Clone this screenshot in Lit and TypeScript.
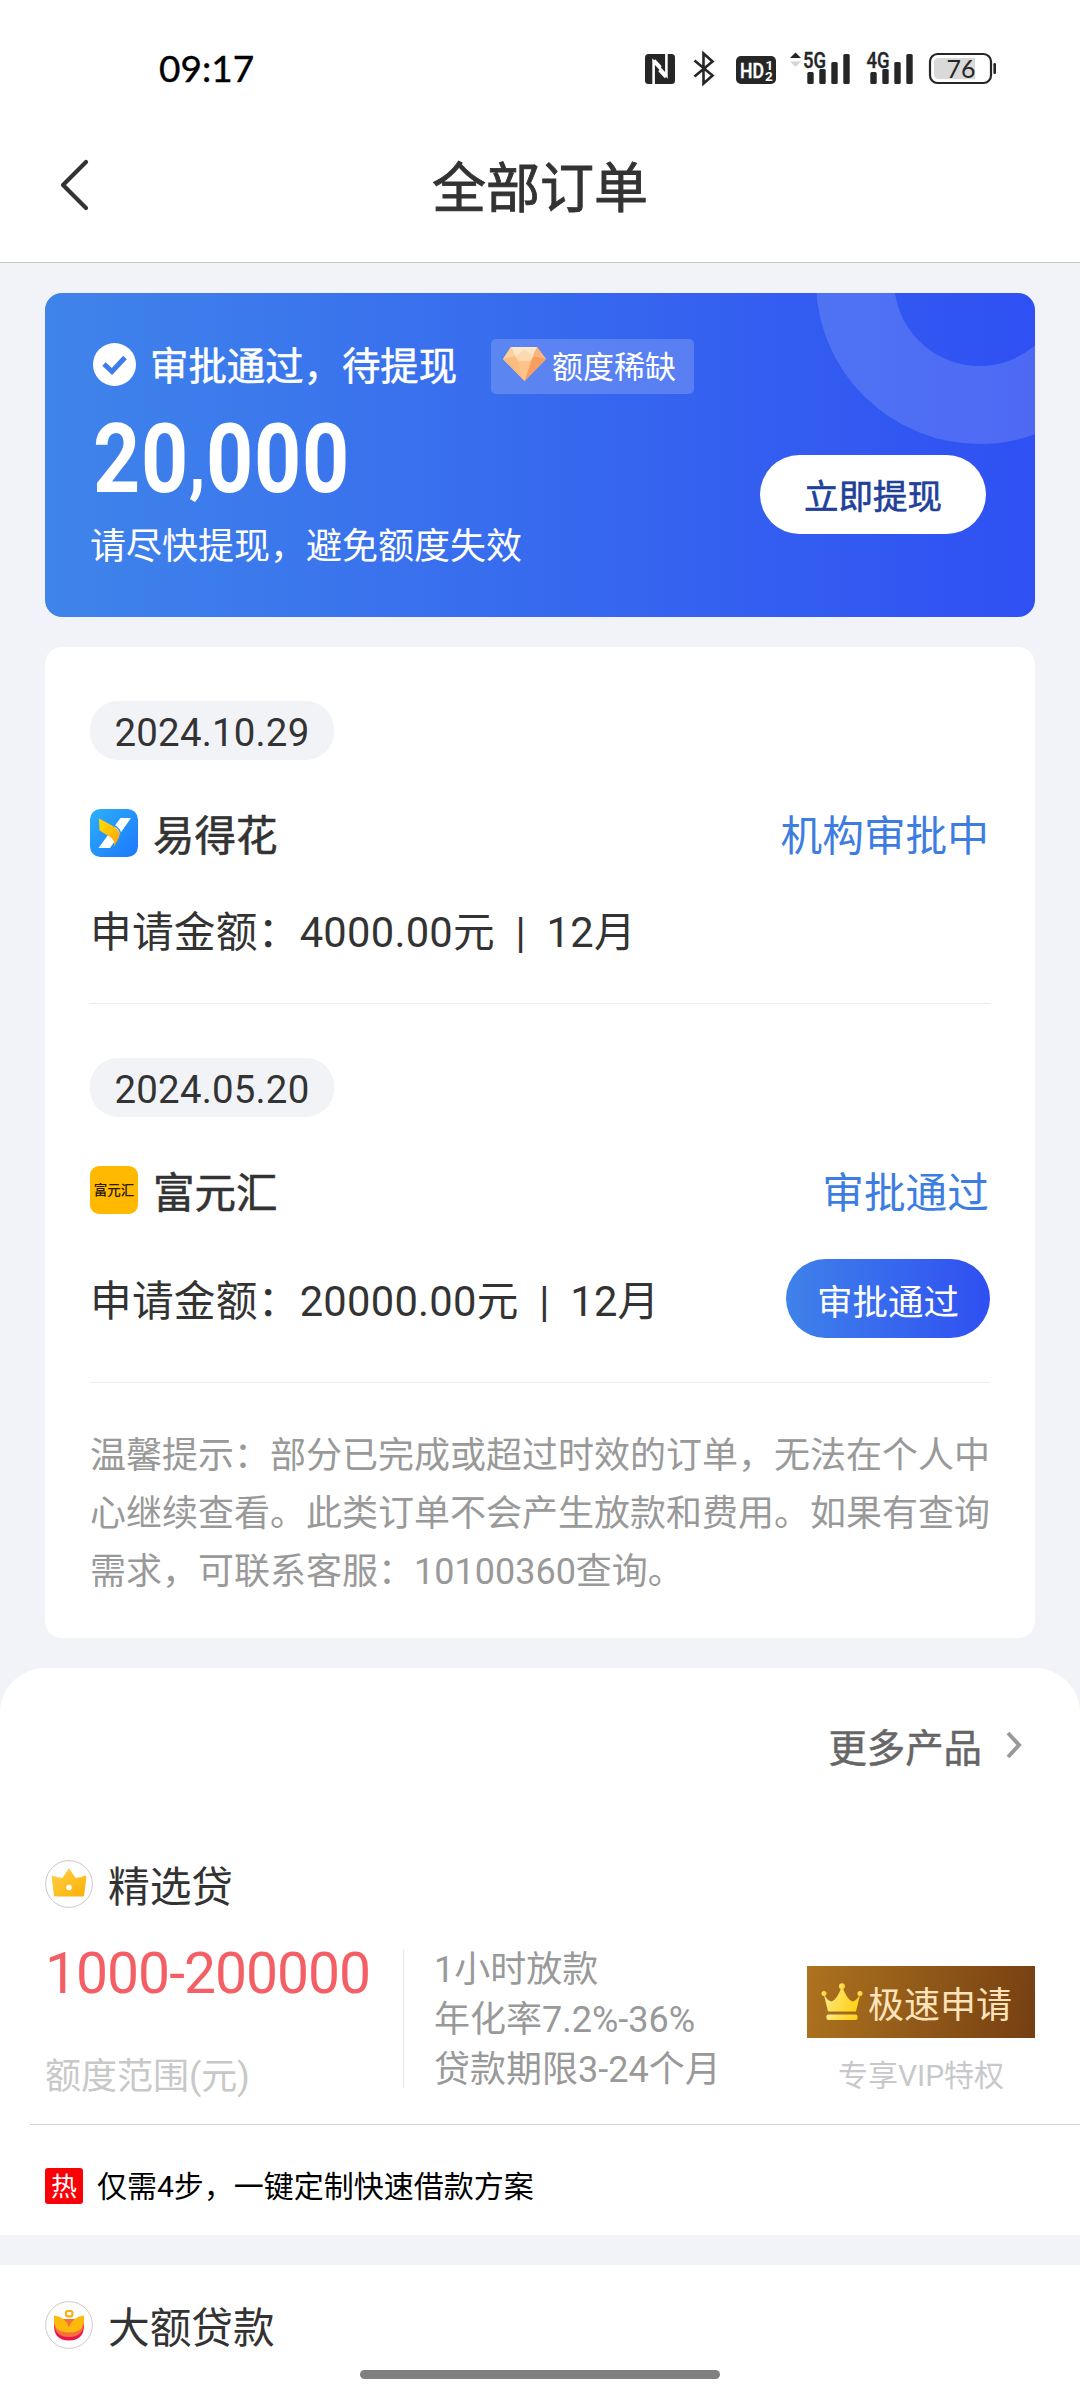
import { LitElement, html, css, svg } from "lit";
import { customElement, property } from "lit/decorators.js";

const base = css`
  * {
    box-sizing: border-box;
  }
  svg {
    display: block;
    flex: none;
  }
`;

@customElement("status-bar")
export class StatusBar extends LitElement {
  static styles = [
    base,
    css`
      :host {
        display: flex;
        height: 108px;
        padding: 0 84px 0 159px;
        justify-content: space-between;
        align-items: flex-start;
      }
      .time {
        margin-top: 46px;
        font: 400 37px/44px Lato, sans-serif;
        color: #000;
        -webkit-text-stroke: 0.4px #000;
      }
      .icons {
        margin-top: 48px;
      }
      .net {
        font: 500 22px Roboto, sans-serif;
        fill: #262626;
        stroke: #262626;
        stroke-width: 0.4px;
      }
      .hd {
        font: 500 21px Roboto, sans-serif;
        fill: #fff;
        stroke: #fff;
        stroke-width: 0.4px;
      }
      .sim {
        font: 700 13.5px Roboto, sans-serif;
        fill: #fff;
      }
      .level {
        font: 400 25px Lato, sans-serif;
        fill: #262626;
      }
    `,
  ];

  private bars(x: number) {
    return svg`<g fill="#262626">
      <rect x=${x} y="24" width="6.4" height="12" rx="1.5"/>
      <rect x=${x + 12} y="21" width="6.4" height="15" rx="1.5"/>
      <rect x=${x + 24} y="14" width="6.4" height="22" rx="1.5"/>
      <rect x=${x + 36} y="6" width="6.4" height="30" rx="1.5"/>
    </g>`;
  }

  render() {
    return html`
      <div class="time">09:17</div>
      <svg class="icons" width="356" height="40" viewBox="0 0 356 40">
        <rect x="5" y="6" width="30" height="30" rx="3.5" fill="#262626" />
        <path
          d="M13.6 36V13.5L26.4 27.5V6"
          fill="none"
          stroke="#fff"
          stroke-width="2.6"
        />
        <path d="M14 12.5L20.5 19.5M19.5 22L26 29" stroke="#fff" stroke-width="3.4" />
        <path
          d="M54.5 12.5L72.5 27.5L63.5 35.5V5.5L72.5 13.5L54.5 28.5"
          fill="none"
          stroke="#262626"
          stroke-width="2.6"
        />
        <rect x="96" y="8" width="40" height="28" rx="5" fill="#262626" />
        <text class="hd" x="100" y="30" textLength="24" lengthAdjust="spacingAndGlyphs">HD</text>
        <text class="sim" x="125.500" y="21.5">1</text>
        <text class="sim" x="125" y="33">2</text>
        <path d="M150 10L155.5 4.5L161 10Z" fill="#262626" />
        <path d="M150 13.5L155.5 19L161 13.5Z" fill="#d6d6d6" />
        ${this.bars(167.3)}
        <text class="net" x="163" y="19.5" textLength="23" lengthAdjust="spacingAndGlyphs">5G</text>
        ${this.bars(230.3)}
        <text class="net" x="226.5" y="19.5" textLength="23" lengthAdjust="spacingAndGlyphs">4G</text>
        <rect x="290" y="6" width="61" height="29" rx="7.5" fill="#fff" stroke="#262626" stroke-width="2.2" />
        <path d="M299 10H335V31H299Q294 31 294 26V15Q294 10 299 10Z" fill="#d9d9d9" />
        <rect x="353.4" y="15" width="2.6" height="11" rx="1.2" fill="#262626" />
        <text class="level" x="306.5" y="29.5">76</text>
      </svg>
    `;
  }
}

@customElement("quota-banner")
export class QuotaBanner extends LitElement {
  static styles = [
    base,
    css`
      :host {
        display: flex;
        position: relative;
        overflow: hidden;
        height: 324px;
        margin: 30px 45px 0;
        padding: 46px 49px 0 46px;
        border-radius: 17px;
        background: linear-gradient(90deg, #3f84ea, #2f50f3);
        color: #fff;
        justify-content: space-between;
      }
      .ring {
        position: absolute;
        left: 771px;
        top: -176px;
        width: 327px;
        height: 327px;
        border-radius: 50%;
        border: 78px solid rgba(255, 255, 255, 0.145);
      }
      .head {
        display: flex;
        align-items: center;
        height: 54px;
      }
      .check {
        margin: -3px 14px 0 2px;
      }
      .title {
        font-size: 38.4px;
        -webkit-text-stroke: 0.5px currentColor;
        line-height: 54px;
        width: 341px;
        padding-top: 1px;
        white-space: nowrap;
      }
      .tag {
        display: flex;
        align-items: center;
        gap: 6px;
        width: 203px;
        height: 55px;
        padding: 0 0 4px 12px;
        border-radius: 5px;
        background: rgba(255, 255, 255, 0.18);
        font-size: 31px;
        white-space: nowrap;
      }
      .amount {
        height: 104px;
        margin: 14px 0 0 2px;
        font-size: 95.5px;
        font-weight: 700;
        line-height: 104px;
        letter-spacing: 0.8px;
        transform: scaleX(0.862);
        transform-origin: left;
        white-space: nowrap;
      }
      .comma {
        font-size: 78px;
        position: relative;
        top: -4px;
      }
      .hint {
        margin: 9px 0 0 -1px;
        font-size: 36px;
        line-height: 54px;
        white-space: nowrap;
      }
      .action {
        display: flex;
        align-items: center;
        justify-content: center;
        width: 226px;
        height: 79px;
        margin-top: 116px;
        padding-bottom: 1px;
        border-radius: 40px;
        background: #fff;
        color: #21409a;
        font-size: 34.5px;
        -webkit-text-stroke: 0.6px currentColor;
      }
    `,
  ];

  render() {
    return html`
      <div class="ring"></div>
      <div>
        <div class="head">
          <svg class="check" width="43" height="43" viewBox="0 0 43 43">
            <circle cx="21.5" cy="21.5" r="21.5" fill="#fff" />
            <path d="M11 21L19 28.5L32 14.5" fill="none" stroke="#3d7ce9" stroke-width="5" />
          </svg>
          <div class="title">审批通过，待提现</div>
          <div class="tag">
            <svg width="43" height="34" viewBox="0 0 43 34">
              <path d="M8 0H34L43 12L21.5 34L0 12Z" fill="#fcc489" />
              <path d="M8 0H34L30 9H12Z" fill="#fee6c8" />
              <path d="M8 0L12 9L0 12Z" fill="#fdd09b" />
              <path d="M34 0L43 12L30 9Z" fill="#fcb47a" />
              <path d="M0 12L12 9L21.5 34Z" fill="#fcbc80" />
              <path d="M43 12L30 9L21.5 34Z" fill="#f99e5c" />
              <path d="M12 9L21.5 3L31 9L27 14H16Z" fill="#fdd9b0" />
            </svg>
            <span>额度稀缺</span>
          </div>
        </div>
        <div class="amount">20<span class="comma">,</span>000</div>
        <div class="hint">请尽快提现，避免额度失效</div>
      </div>
      <div class="action">立即提现</div>
    `;
  }
}

@customElement("order-item")
export class OrderItem extends LitElement {
  @property() date = "";
  @property() name = "";
  @property() status = "";
  @property() amount = "";
  @property() logo = "";
  @property() action = "";

  static styles = [
    base,
    css`
      :host {
        display: block;
        border-bottom: 1px solid #ececec;
        color: #333;
        white-space: nowrap;
      }
      .date {
        display: flex;
        align-items: center;
        justify-content: center;
        width: 244px;
        height: 59px;
        padding-top: 3px;
        border-radius: 28px;
        background: #f2f3f7;
        font-size: 38.4px;
        letter-spacing: 0.2px;
      }
      .row {
        display: flex;
        align-items: center;
        height: 60px;
        margin-top: 43px;
      }
      .name {
        flex: 1;
        margin: 7px 0 0 15px;
        font-size: 41.5px;
        -webkit-text-stroke: 0.6px currentColor;
        line-height: 60px;
      }
      .status {
        margin: 7px 1px 0 0;
        font-size: 41.7px;
        line-height: 60px;
        color: #3d7de2;
      }
      .detail {
        display: flex;
        align-items: center;
        justify-content: space-between;
        height: 80px;
        margin-top: 26px;
        font-size: 41.7px;
        letter-spacing: 0.25px;
        word-spacing: 10px;
      }
      .tall {
        margin-top: 38px;
      }
      .button {
        display: flex;
        align-items: center;
        justify-content: center;
        width: 204px;
        height: 79px;
        border-radius: 40px;
        background: linear-gradient(90deg, #3f82ea, #2f4ff2);
        color: #fff;
        font-size: 35.5px;
        letter-spacing: 0;
        padding-top: 2px;
      }
      .mark {
        font: 500 13.5px "Noto Sans CJK SC", sans-serif;
        fill: #2a1a00;
      }
    `,
  ];

  private renderLogo() {
    if (this.logo === "leaf") {
      return html`<svg width="48" height="48" viewBox="0 0 48 48">
        <defs>
          <linearGradient id="sky" x1="0" y1="0" x2="1" y2="1">
            <stop offset="0" stop-color="#2db0fb" />
            <stop offset="1" stop-color="#1c76fc" />
          </linearGradient>
          <linearGradient id="gold" x1="0" y1="0" x2="1" y2="1">
            <stop offset="0" stop-color="#ffe000" />
            <stop offset="1" stop-color="#ff9f0a" />
          </linearGradient>
        </defs>
        <rect width="48" height="48" rx="10.5" fill="url(#sky)" />
        <path d="M30.5 9H41L20 39H8.5Z" fill="#fff" />
        <path d="M9 9.5L22 16.5Q32 22 29 28.5L24 37.5Q25 30.5 19.5 27.5L9.5 21.5Z" fill="url(#gold)" />
        <path d="M23 16Q31 20 30.5 26" fill="none" stroke="#279bfb" stroke-width="1.4" />
      </svg>`;
    }
    return html`<svg width="48" height="48" viewBox="0 0 48 48">
      <rect width="48" height="48" rx="9" fill="#ffb900" />
      <text class="mark" x="24" y="28.5" text-anchor="middle">富元汇</text>
    </svg>`;
  }

  render() {
    return html`
      <div class="date">${this.date}</div>
      <div class="row">
        ${this.renderLogo()}
        <div class="name">${this.name}</div>
        <div class="status">${this.status}</div>
      </div>
      <div class="detail ${this.action ? "tall" : ""}">
        <span>申请金额：${this.amount}</span>
        ${this.action ? html`<div class="button">${this.action}</div>` : null}
      </div>
    `;
  }
}

@customElement("loan-products")
export class LoanProducts extends LitElement {
  static styles = [
    base,
    css`
      :host {
        display: block;
        white-space: nowrap;
      }
      .featured {
        height: 567px;
        margin-top: 30px;
        border-radius: 45px 45px 0 0;
        background: #fff;
        overflow: hidden;
      }
      .more {
        display: flex;
        align-items: center;
        justify-content: flex-end;
        gap: 24px;
        height: 60px;
        margin-top: 47px;
        padding-right: 58px;
        font-size: 38.4px;
        -webkit-text-stroke: 0.5px currentColor;
        color: #666;
      }
      .brand {
        display: flex;
        align-items: center;
        gap: 15px;
        height: 60px;
        padding-left: 45px;
        font-size: 41.7px;
        color: #333;
      }
      .first {
        margin-top: 79px;
      }
      .brand-name {
        margin-top: -1px;
      }
      .offer {
        display: flex;
        height: 138px;
        margin-top: 36px;
        padding: 0 45px;
      }
      .range {
        width: 359px;
        border-right: 1px solid #e6e6e6;
      }
      .sum {
        font-size: 57px;
        line-height: 60px;
        margin-top: -6px;
        letter-spacing: -1px;
        color: #f35f64;
      }
      .caption {
        margin-top: 45px;
        font-size: 36px;
        line-height: 56px;
        color: #c8c8c8;
      }
      .terms {
        flex: 1;
        padding-left: 30px;
        margin-top: -5px;
        font-size: 36px;
        line-height: 50px;
        color: #999;
      }
      .apply {
        width: 228px;
        padding-top: 16px;
      }
      .vip {
        display: flex;
        align-items: center;
        gap: 5px;
        height: 72px;
        padding-left: 14px;
        background: linear-gradient(100deg, #ad731f, #753f12);
        color: #ffe4bb;
        font-size: 36px;
      }
      .perk {
        margin-top: 17px;
        text-align: center;
        font-size: 30px;
        line-height: 42px;
        color: #c8c8cb;
      }
      .promo {
        display: flex;
        align-items: center;
        gap: 14px;
        height: 110px;
        margin: 36px 0 0 30px;
        padding: 12px 0 0 15px;
        border-top: 1px solid #d2d2d4;
        font-size: 30px;
        color: #000;
      }
      .slogan {
        margin-top: -4px;
      }
      .hot {
        display: flex;
        align-items: center;
        justify-content: center;
        width: 38px;
        height: 36px;
        border-radius: 3px;
        background: #fb0007;
        color: #fff;
        font-size: 26px;
        line-height: 38px;
        padding-top: 2px;
      }
      .next {
        height: 135px;
        margin-top: 30px;
        padding-top: 30px;
        background: #fff;
      }
    `,
  ];

  render() {
    return html`
      <section class="featured">
        <div class="more">
          <span>更多产品</span>
          <svg width="16" height="28" viewBox="0 0 16 28">
            <path d="M2 2L13 14L2 26" fill="none" stroke="#999" stroke-width="4" />
          </svg>
        </div>
        <div class="brand first">
          <svg width="48" height="48" viewBox="0 0 48 48">
            <defs>
              <linearGradient id="crown" x1="0" y1="0" x2="1" y2="1">
                <stop offset="0" stop-color="#ffd04a" />
                <stop offset="1" stop-color="#fbb003" />
              </linearGradient>
            </defs>
            <circle cx="24" cy="24" r="23.4" fill="#fff" stroke="#c9c9cc" />
            <path
              d="M24 9L30.5 18.5Q35 18 41 16L38.5 36H9.5L7 16Q13 18 17.5 18.5Z"
              fill="url(#crown)"
              stroke="url(#crown)"
              stroke-linejoin="round"
            />
            <circle cx="24" cy="27.5" r="2.8" fill="#fff" />
          </svg>
          <span class="brand-name">精选贷</span>
        </div>
        <div class="offer">
          <div class="range">
            <div class="sum">1000-200000</div>
            <div class="caption">额度范围(元)</div>
          </div>
          <div class="terms">
            <div>1小时放款</div>
            <div>年化率7.2%-36%</div>
            <div>贷款期限3-24个月</div>
          </div>
          <div class="apply">
            <div class="vip">
              <svg width="42" height="38" viewBox="0 0 42 38">
                <defs>
                  <linearGradient id="gilt" x1="0" y1="0" x2="1" y2="0.3">
                    <stop offset="0" stop-color="#fff0a0" />
                    <stop offset="0.45" stop-color="#ffdf57" />
                    <stop offset="1" stop-color="#ffd21c" />
                  </linearGradient>
                </defs>
                <g fill="url(#gilt)">
                  <path d="M2.500 10L7 28.500H35L39.500 10Q36 18 31.500 18.500Q26 17 21 3Q16 17 10.500 18.500Q6 18 2.500 10Z" />
                  <circle cx="21" cy="3.2" r="2.9" />
                  <circle cx="3" cy="10.5" r="2.5" />
                  <circle cx="39" cy="10.5" r="2.5" />
                  <rect x="5.5" y="31.5" width="31" height="5.5" rx="1.8" />
                </g>
              </svg>
              <span>极速申请</span>
            </div>
            <div class="perk">专享VIP特权</div>
          </div>
        </div>
        <div class="promo">
          <span class="hot">热</span>
          <span class="slogan">仅需4步，一键定制快速借款方案</span>
        </div>
      </section>
      <section class="next">
        <div class="brand">
          <svg width="48" height="48" viewBox="0 0 48 48">
            <circle cx="24" cy="24" r="23.4" fill="#fff" stroke="#d0c9c9" />
            <path d="M9 22Q8 39.500 24 39.500Q40 39.500 39 22Z" fill="#e8174d" />
            <path d="M9 18Q8 36 24 36Q40 36 39 18Z" fill="#f86f3d" />
            <path
              d="M9 14.500Q21 16 24 26.500Q27 16 39 14.500V19Q39 31.500 24 31.500Q9 31.500 9 19Z"
              fill="#fdb90c"
            />
            <rect x="21" y="10" width="6.400" height="5.400" rx="1.800" fill="#fff" stroke="#f9ae14" stroke-width="2.200" />
          </svg>
          <span class="brand-name">大额贷款</span>
        </div>
      </section>
    `;
  }
}

@customElement("app-root")
export class AppRoot extends LitElement {
  static styles = [
    base,
    css`
      :host {
        display: block;
        position: relative;
        width: 1080px;
        height: 2400px;
        overflow: hidden;
        background: #f2f3f8;
        font-family: Roboto, "Noto Sans CJK SC", sans-serif;
      }
      .top {
        height: 263px;
        background: #fff;
        border-bottom: 1px solid #c6c6c8;
      }
      .nav {
        display: grid;
        grid-template-columns: 120px 1fr 120px;
        align-items: center;
        height: 154px;
      }
      .back {
        margin-left: 58px;
      }
      .heading {
        text-align: center;
        font-size: 54px;
        -webkit-text-stroke: 0.9px currentColor;
        line-height: 80px;
        padding-top: 9px;
        color: #333;
      }
      .orders {
        display: flex;
        flex-direction: column;
        gap: 54px;
        height: 991px;
        margin: 30px 45px 0;
        padding: 54px 45px 0;
        border-radius: 17px;
        background: #fff;
      }
      .orders order-item:first-of-type {
        height: 303px;
      }
      .orders order-item:last-of-type {
        height: 325px;
      }
      .tips {
        margin-top: -10px;
        font-size: 36px;
        line-height: 58px;
        color: #999;
      }
      .line {
        white-space: nowrap;
      }
      .home {
        position: absolute;
        left: 360px;
        bottom: 21px;
        width: 360px;
        height: 9px;
        border-radius: 5px;
        background: #808080;
      }
    `,
  ];

  render() {
    return html`
      <header class="top">
        <status-bar></status-bar>
        <div class="nav">
          <svg class="back" width="32" height="54" viewBox="0 0 32 54">
            <path
              d="M28 4L5 27L28 50"
              fill="none"
              stroke="#333"
              stroke-width="4.2"
              stroke-linecap="round"
              stroke-linejoin="round"
            />
          </svg>
          <div class="heading">全部订单</div>
        </div>
      </header>
      <quota-banner></quota-banner>
      <section class="orders">
        <order-item
          date="2024.10.29"
          name="易得花"
          status="机构审批中"
          amount="4000.00元 | 12月"
          logo="leaf"
        ></order-item>
        <order-item
          date="2024.05.20"
          name="富元汇"
          status="审批通过"
          amount="20000.00元 | 12月"
          logo="word"
          action="审批通过"
        ></order-item>
        <div class="tips">
          <div class="line">温馨提示：部分已完成或超过时效的订单，无法在个人中</div>
          <div class="line">心继续查看。此类订单不会产生放款和费用。如果有查询</div>
          <div class="line">需求，可联系客服：10100360查询。</div>
        </div>
      </section>
      <loan-products></loan-products>
      <div class="home"></div>
    `;
  }
}
